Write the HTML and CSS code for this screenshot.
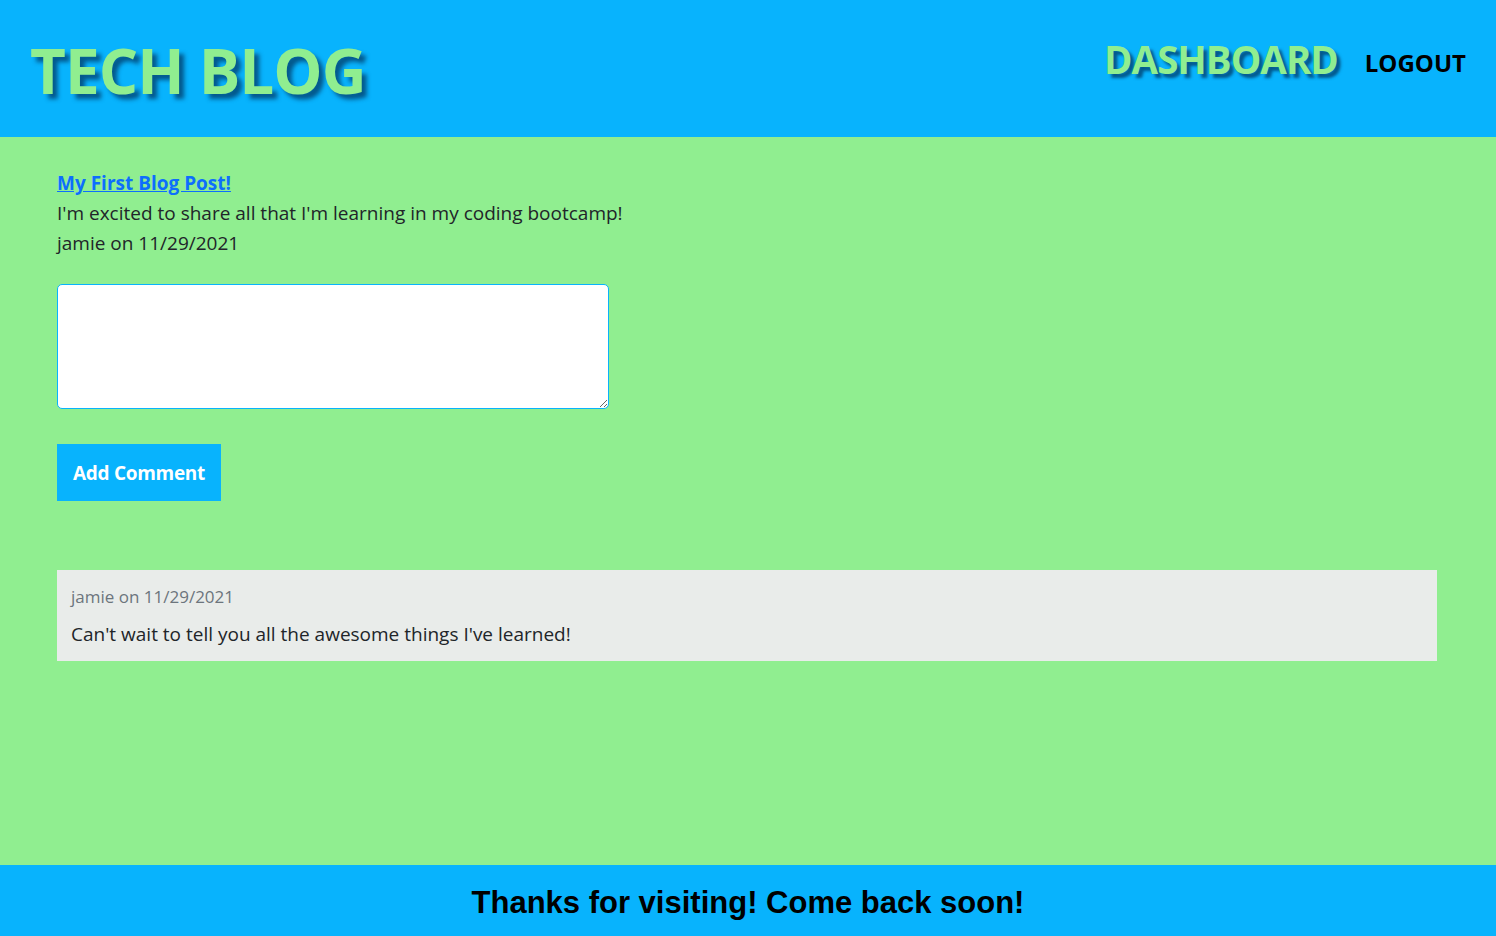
FILE: index.html
```html
<!DOCTYPE html>
<html lang="en">
<head>
<meta charset="utf-8">
<title>Tech Blog</title>
<link rel="stylesheet" href="styles.css">
</head>
<body>
<header class="site-header">
  <h1 class="brand">TECH BLOG</h1>
  <nav class="nav">
    <a class="nav-dash" href="#">DASHBOARD</a>
    <a class="nav-logout" href="#">LOGOUT</a>
  </nav>
</header>
<main class="main">
  <section class="post">
    <a class="post-title" href="#">My First Blog Post!</a>
    <p class="post-body">I'm excited to share all that I'm learning in my coding bootcamp!</p>
    <p class="post-meta">jamie on 11/29/2021</p>
  </section>
  <form class="comment-form">
    <textarea class="comment-input"></textarea>
    <button class="btn" type="button">Add Comment</button>
  </form>
  <section class="comments">
    <div class="comment">
      <p class="comment-meta">jamie on 11/29/2021</p>
      <p class="comment-text">Can't wait to tell you all the awesome things I've learned!</p>
    </div>
  </section>
</main>
<footer class="site-footer">
  <p>Thanks for visiting! Come back soon!</p>
</footer>
</body>
</html>
```
FILE: styles.css
```css
* { box-sizing: border-box; }
html, body { height: 100%; }
body {
  margin: 0;
  font-family: "Open Sans", "Noto Sans", sans-serif;
  background: #90ee90;
  color: #212529;
  display: flex;
  flex-direction: column;
  min-height: 100%;
}
.site-header {
  background: #08b3fd;
  height: 137px;
  display: flex;
  align-items: center;
  justify-content: space-between;
  padding: 0 30px 0 30px;
  flex-shrink: 0;
}
.brand {
  margin: 0;
  font-size: 62px;
  font-weight: 700;
  color: #90ee90;
  letter-spacing: -1px;
  text-shadow: 5px 5px 4px rgba(0, 40, 80, 0.65);
  line-height: 1;
  position: relative;
  top: 1px;
}
.nav {
  display: flex;
  align-items: center;
  gap: 27px;
  margin-top: -12px;
}
.nav a { text-decoration: none; font-weight: 700; }
.nav-dash {
  font-size: 38.5px;
  color: #90ee90;
  letter-spacing: -1px;
  text-shadow: 4px 4px 3px rgba(0, 40, 80, 0.65);
  position: relative;
  top: -4px;
}
.nav-logout {
  font-size: 24px;
  color: #000;
}
.main {
  flex: 1;
  padding: 31px 59px 40px 57px;
}
.post { font-size: 19px; line-height: 30px; }
.post p { margin: 0; }
.post-title {
  color: #0d6efd;
  font-weight: 700;
  text-decoration: underline;
}
.comment-form {
  margin-top: 26px;
  display: flex;
  flex-direction: column;
  align-items: flex-start;
}
.comment-input {
  width: 552px;
  height: 125px;
  border: 1px solid #08b3fd;
  border-radius: 5px;
  background: #fff;
  font: inherit;
}
.btn {
  margin-top: 35px;
  width: 164px;
  height: 57px;
  background: #08b3fd;
  color: #fff;
  border: 0;
  font-family: inherit;
  font-size: 19px;
  font-weight: 700;
  letter-spacing: -0.3px;
  padding: 0;
}
.comments { margin-top: 69px; }
.comment {
  background: #e9ecea;
  padding: 14px 14px 13px;
}
.comment-meta { margin: 0; font-size: 17px; color: #6c757d; line-height: 26px; }
.comment-text { margin: 10px 0 0; font-size: 19px; line-height: 28px; }
.site-footer {
  background: #08b3fd;
  height: 71px;
  display: flex;
  align-items: center;
  justify-content: center;
  flex-shrink: 0;
}
.site-footer p {
  margin: 0;
  font-family: "Liberation Sans", Arial, sans-serif;
  font-weight: 700;
  font-size: 31px;
  color: #000;
  position: relative;
  top: 2px;
}
```
